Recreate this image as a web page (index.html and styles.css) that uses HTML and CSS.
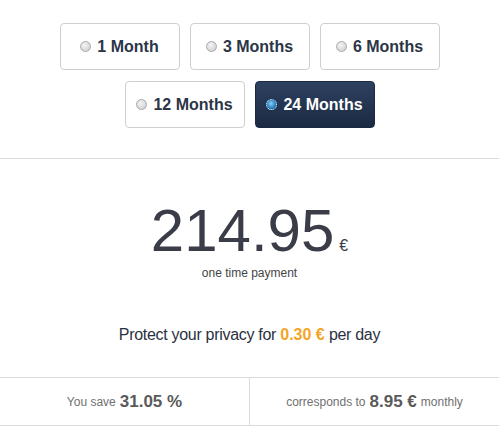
FILE: index.html
```html
<!DOCTYPE html>
<html lang="en">
<head>
  <meta charset="UTF-8">
  <title>Choose your plan</title>
  <link rel="stylesheet" href="styles.css">
</head>
<body>
  <section class="plans">
    <label class="plan"><span class="radio"></span>1 Month</label>
    <label class="plan"><span class="radio"></span>3 Months</label>
    <label class="plan"><span class="radio"></span>6 Months</label>
    <label class="plan"><span class="radio"></span>12 Months</label>
    <label class="plan active"><span class="radio"></span>24 Months</label>
  </section>

  <section class="price">
    <div class="amount">214.95<span class="cur">€</span></div>
    <div class="note">one time payment</div>
    <p class="daily">Protect your privacy for <strong>0.30 €</strong> per day</p>
  </section>

  <section class="stats">
    <div class="stat">You save <b>31.05 %</b></div>
    <div class="stat">corresponds to <b>8.95 €</b> monthly</div>
  </section>
</body>
</html>
```

FILE: styles.css
```css
body {
  margin: 0;
  font-family: 'Liberation Sans', Arial, sans-serif;
  background: #ffffff;
  color: #2f3442;
}

.plans {
  display: flex;
  flex-wrap: wrap;
  justify-content: center;
  column-gap: 10px;
  row-gap: 11px;
  padding: 23px 40px 30px;
  border-bottom: 1px solid #dcdcdc;
}

.plan {
  width: 120px;
  height: 47px;
  box-sizing: border-box;
  display: flex;
  align-items: center;
  justify-content: center;
  gap: 6px;
  border: 1px solid #cfcfcf;
  border-radius: 4px;
  background: #fff;
  font-size: 16px;
  font-weight: bold;
  color: #2b3546;
}

.radio {
  width: 9px;
  height: 9px;
  border-radius: 50%;
  border: 1px solid #a9a9a9;
  background: radial-gradient(circle at 40% 35%, #f4f4f4, #c9c9c9);
}

.plan.active {
  background: linear-gradient(#2e4160, #1b2a42);
  border-color: #1b2a42;
  color: #fff;
}

.plan.active .radio {
  border: 1px dotted #e6eef5;
  background: radial-gradient(circle at 45% 40%, #8fd0f5, #2a7fc0 60%, #1b4d78);
}

.price {
  text-align: center;
  padding-top: 41px;
}

.amount {
  font-size: 60px;
  line-height: 61px;
  color: #3a3c47;
}

.cur {
  font-size: 16px;
  line-height: 1;
  margin-left: 5px;
}

.note {
  margin-top: 4px;
  font-size: 12px;
  line-height: 16px;
  color: #444;
}

.daily {
  margin: 44px 0 32px;
  font-size: 16px;
  line-height: 20px;
  color: #2b3140;
  letter-spacing: -0.3px;
}

.daily strong {
  color: #f3a526;
  letter-spacing: 0;
}

.stats {
  display: flex;
  border-top: 1px solid #dcdcdc;
  border-bottom: 1px solid #dcdcdc;
}

.stat {
  flex: 1;
  height: 47px;
  display: flex;
  align-items: center;
  justify-content: center;
  gap: 4px;
  font-size: 12px;
  color: #707070;
}

.stat + .stat {
  border-left: 1px solid #dcdcdc;
}

.stat b {
  font-size: 17px;
  color: #5a5a5a;
}
```
